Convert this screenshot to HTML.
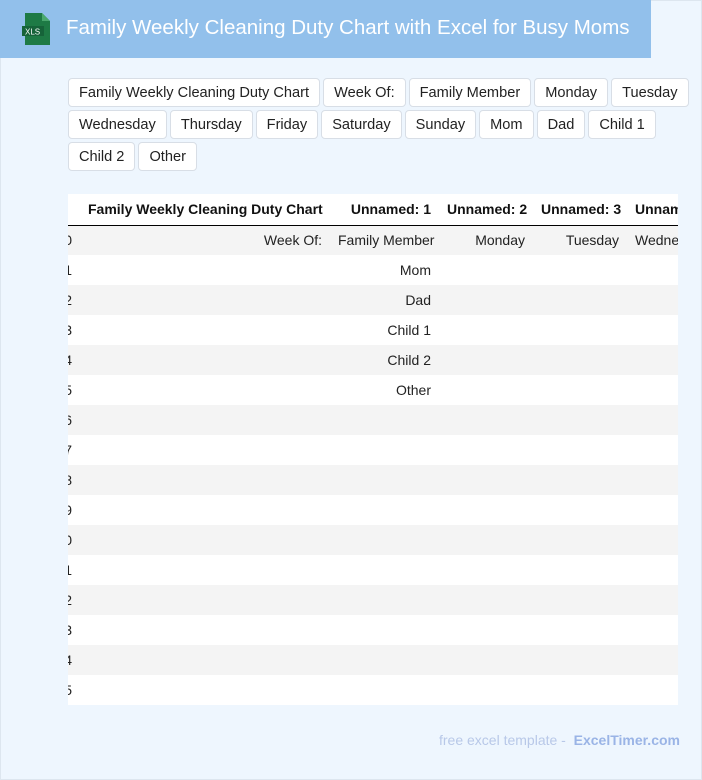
<!DOCTYPE html>
<html><head><style>
body{margin:0;width:702px;height:780px;background:#fff;font-family:"Liberation Sans",Arial,sans-serif;overflow:hidden}
.page{position:absolute;left:0;top:0;width:700px;height:778px;background:#eef6fe;border:1px solid #dde6ef}
.hdr{position:absolute;left:-1px;top:-1px;width:651px;height:58px;background:#92c0eb}
.hdr h1{position:absolute;left:66px;top:16px;margin:0;font-size:20.5px;font-weight:normal;color:#fff;white-space:nowrap}
.icon{position:absolute;left:22px;top:13px}
.btns{position:absolute;left:67px;top:77px;width:634px}
.b{display:inline-block;box-sizing:border-box;height:29px;line-height:28px;padding:0 10px;margin:0 3px 3px 0;background:#fff;border:1px solid #d8dee6;border-radius:4px;font-size:14.6px;color:#222;vertical-align:top}
.tw{position:absolute;left:67px;top:193px;width:610px;height:511px;overflow:hidden;background:#fff}
table{position:absolute;left:-12px;top:0;border-collapse:collapse;font-size:14px;white-space:nowrap;table-layout:fixed}
td,th{height:30px;padding:0 8px;text-align:right;box-sizing:border-box;overflow:hidden}
th{height:31px;border-bottom:1px solid #000;font-weight:bold;color:#111}
tr.g td{background:#f4f4f4}
td{color:#222}
.foot{position:absolute;right:21px;top:731px;font-size:14px;color:#b8c8e8}
.foot b{color:#9ab4e6}
</style></head><body><div class="page">
<div class="hdr">
<svg class="icon" width="28" height="32" viewBox="0 0 28 32"><path d="M3 0h17l8 8v24H3z" fill="#1e7a45"/><path d="M20 0v8h8z" fill="#4aa86e"/><rect x="0" y="13" width="22" height="10" fill="#166339"/><text x="3" y="21.5" font-size="8" fill="#fff" font-family="Liberation Sans">XLS</text></svg>
<h1>Family Weekly Cleaning Duty Chart with Excel for Busy Moms</h1></div>
<div class="btns">
<span class="b">Family Weekly Cleaning Duty Chart</span><span class="b">Week Of:</span><span class="b">Family Member</span><span class="b">Monday</span><span class="b">Tuesday</span><span class="b">Wednesday</span><span class="b">Thursday</span><span class="b">Friday</span><span class="b">Saturday</span><span class="b">Sunday</span><span class="b">Mom</span><span class="b">Dad</span><span class="b">Child 1</span><span class="b">Child 2</span><span class="b">Other</span>
</div>
<div class="tw"><table style="width:715px">
<colgroup><col style="width:24px"><col style="width:250px"><col style="width:109px"><col style="width:94px"><col style="width:94px"><col style="width:144px"></colgroup>
<tr><th></th><th>Family Weekly Cleaning Duty Chart</th><th>Unnamed: 1</th><th>Unnamed: 2</th><th>Unnamed: 3</th><th style="text-align:left">Unnamed: 4</th></tr>
<tr class="g"><td>0</td><td>Week Of:</td><td>Family Member</td><td>Monday</td><td>Tuesday</td><td style="text-align:left">Wednesday</td></tr>
<tr><td>1</td><td></td><td>Mom</td><td></td><td></td><td></td></tr>
<tr class="g"><td>2</td><td></td><td>Dad</td><td></td><td></td><td></td></tr>
<tr><td>3</td><td></td><td>Child 1</td><td></td><td></td><td></td></tr>
<tr class="g"><td>4</td><td></td><td>Child 2</td><td></td><td></td><td></td></tr>
<tr><td>5</td><td></td><td>Other</td><td></td><td></td><td></td></tr>
<tr class="g"><td>6</td><td></td><td></td><td></td><td></td><td></td></tr>
<tr><td>7</td><td></td><td></td><td></td><td></td><td></td></tr>
<tr class="g"><td>8</td><td></td><td></td><td></td><td></td><td></td></tr>
<tr><td>9</td><td></td><td></td><td></td><td></td><td></td></tr>
<tr class="g"><td>0</td><td></td><td></td><td></td><td></td><td></td></tr>
<tr><td>1</td><td></td><td></td><td></td><td></td><td></td></tr>
<tr class="g"><td>2</td><td></td><td></td><td></td><td></td><td></td></tr>
<tr><td>3</td><td></td><td></td><td></td><td></td><td></td></tr>
<tr class="g"><td>4</td><td></td><td></td><td></td><td></td><td></td></tr>
<tr><td>5</td><td></td><td></td><td></td><td></td><td></td></tr>
</table></div>
<div class="foot">free excel template - &nbsp;<b>ExcelTimer.com</b></div>
</div></body></html>
